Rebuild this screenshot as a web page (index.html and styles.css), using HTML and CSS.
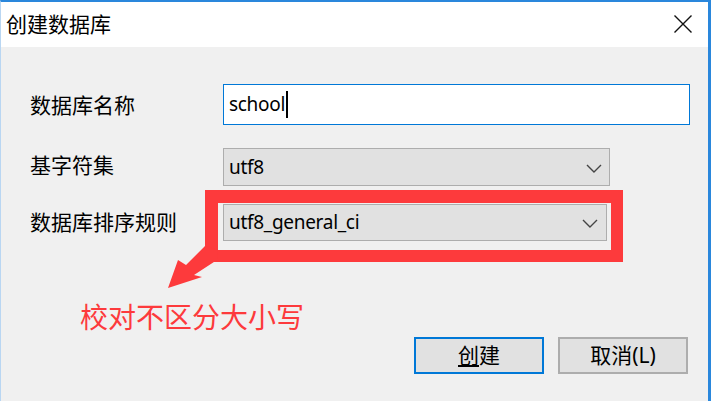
FILE: index.html
```html
<!DOCTYPE html>
<html lang="zh-CN">
<head>
<meta charset="utf-8">
<title>创建数据库</title>
<link rel="stylesheet" href="styles.css">
</head>
<body>
<div class="window">
  <div class="titlebar">
    <span class="title">创建数据库</span>
    <svg class="close" width="20" height="20" viewBox="0 0 20 20"><path d="M1.5 1.5 L18.5 18.5 M18.5 1.5 L1.5 18.5" stroke="#111" stroke-width="1.4" fill="none"/></svg>
  </div>
  <div class="content">
    <div class="row row-name">
      <label class="label">数据库名称</label>
      <div class="input"><span class="val">school</span><span class="caret"></span></div>
    </div>
    <div class="row row-charset">
      <label class="label">基字符集</label>
      <div class="select sel-charset"><span class="val">utf8</span>
        <svg class="chev" width="16" height="9" viewBox="0 0 16 9"><polyline points="1,1 8,8 15,1" fill="none" stroke="#444" stroke-width="1.4"/></svg>
      </div>
    </div>
    <div class="row row-collate">
      <label class="label">数据库排序规则</label>
      <div class="select sel-collate"><span class="val">utf8_general_ci</span>
        <svg class="chev" width="16" height="9" viewBox="0 0 16 9"><polyline points="1,1 8,8 15,1" fill="none" stroke="#444" stroke-width="1.4"/></svg>
      </div>
    </div>
    <div class="note">校对不区分大小写</div>
    <div class="buttons">
      <button class="btn btn-default"><span class="ul">创</span>建</button>
      <button class="btn">取消(L)</button>
    </div>
  </div>
  <svg class="annot" width="711" height="401" viewBox="0 0 711 401">
    <path fill="#fd3a3c" fill-rule="evenodd" d="M205 190 H623 V262 H205 Z M218 203 H611 V250 H218 Z"/>
    <polygon fill="#fd3a3c" points="205,246 218,250 217,260 194,275 202,277 168,288 178,260 186,265"/>
  </svg>
</div>
</body>
</html>
```
FILE: styles.css
```css
* { box-sizing: border-box; }
html, body { margin: 0; padding: 0; }
body {
  width: 711px;
  height: 401px;
  overflow: hidden;
  font-family: "Noto Sans", "Noto Sans CJK SC", sans-serif;
  background: #f0f0f0;
}
.window {
  position: relative;
  width: 711px;
  height: 401px;
  border-top: 2px solid #2a87dc;
  border-left: 1px solid #b9d6f2;
  border-right: 3px solid #2a87dc;
  background: #f0f0f0;
  display: flex;
  flex-direction: column;
}
.titlebar {
  height: 45px;
  background: #ffffff;
  display: flex;
  align-items: center;
  justify-content: space-between;
  padding: 0 15px 0 5px;
  flex: none;
}
.title {
  font-family: "Noto Sans CJK SC", sans-serif;
  font-size: 21px;
  color: #000;
  line-height: 1;
  margin-top: -2px;
}
.close { display: block; margin-top: -1px; }
.content {
  padding: 37px 0 0 29px;
  display: flex;
  flex-direction: column;
}
.row {
  display: flex;
  align-items: center;
}
.label {
  width: 193px;
  flex: none;
  font-family: "Noto Sans CJK SC", sans-serif;
  font-size: 21px;
  color: #000;
  line-height: 1;
}
.row-name .label { margin-top: -1px; }
.row-charset { margin-top: 23px; }
.row-charset .label { margin-top: -5px; }
.row-collate { margin-top: 18px; }
.row-collate .label { margin-top: -3px; }
.input {
  width: 467px;
  height: 41px;
  background: #fff;
  border: 1px solid #0078d7;
  display: flex;
  align-items: center;
  padding-left: 5px;
}
.val {
  font-size: 19px;
  color: #000;
  line-height: 1;
  letter-spacing: -0.3px;
}
.caret {
  width: 2px;
  height: 27px;
  background: #000;
  margin-left: 1px;
}
.select {
  height: 38px;
  background: #e1e1e1;
  border: 1px solid #adadad;
  display: flex;
  align-items: center;
  justify-content: space-between;
  padding: 0 7px 0 5px;
}
.sel-charset { width: 387px; }
.sel-collate { width: 384px; height: 37px; padding-right: 8px; }
.chev { display: block; margin-top: 2px; }
.note {
  margin-top: 58px;
  padding-left: 50px;
  font-family: "Noto Sans CJK SC", sans-serif;
  font-size: 28px;
  line-height: 34px;
  color: #fd3a3c;
}
.buttons {
  margin-top: 4px;
  display: flex;
  justify-content: flex-end;
  gap: 14px;
  padding-right: 20px;
}
.btn {
  width: 130px;
  height: 37px;
  background: #e1e1e1;
  border: 2px solid #adadad;
  font-family: "Noto Sans", "Noto Sans CJK SC", sans-serif;
  font-size: 21px;
  color: #000;
  line-height: 1;
  padding: 0;
  margin: 0;
  display: flex;
  align-items: center;
  justify-content: center;
}
.btn-default { border-color: #0078d7; }
.ul { text-decoration: underline; text-underline-offset: 2px; }
.annot {
  position: absolute;
  left: -1px;
  top: -2px;
  pointer-events: none;
}
```
